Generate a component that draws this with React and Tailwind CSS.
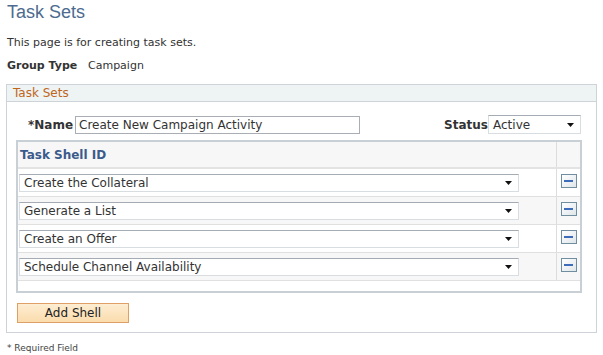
import React from 'react';

const shells = [
  'Create the Collateral',
  'Generate a List',
  'Create an Offer',
  'Schedule Channel Availability',
];

function Arrow() {
  return (
    <svg width="7" height="4" viewBox="0 0 7 4" className="block">
      <path d="M0 0H7L3.5 4Z" fill="#111" />
    </svg>
  );
}

function SelectBox({ value, className }) {
  return (
    <div className={`flex items-center justify-between bg-white border border-[#d8dde2] border-t-[#a6acb3] pl-[4px] pr-[6px] ${className}`}>
      <span className="text-[12px] leading-none text-[#333]">{value}</span>
      <Arrow />
    </div>
  );
}

function MinusButton() {
  return (
    <div className="w-[16px] h-[14px] border border-[#6f8fa0] bg-gradient-to-br from-[#ffffff] to-[#dfe6ea] flex items-center justify-center">
      <div className="w-[9px] h-[2px] bg-[#3c6cba]" />
    </div>
  );
}

export default function App() {
  return (
    <div className="w-[603px] h-[355px] bg-white text-[#333] font-['DejaVu_Sans',Verdana,sans-serif] text-[11px] overflow-hidden">
      <div className="pl-[7px] pt-[1px] h-[24px] text-[18px] leading-[22px] text-[#4d6b8f] font-['Liberation_Sans',Arial,sans-serif]">
        Task Sets
      </div>
      <div className="pl-[7px] mt-[12px] h-[14px] leading-[14px]">This page is for creating task sets.</div>
      <div className="pl-[7px] mt-[9px] h-[14px] leading-[14px] flex">
        <span className="font-bold w-[81px]">Group Type</span>
        <span>Campaign</span>
      </div>

      <div className="ml-[6px] mt-[11px] w-[591px] h-[249px] border border-[#cdd3d8] flex flex-col">
        <div className="h-[17px] bg-[#eef3f3] border-b border-[#cdd3d8] pl-[6px] text-[12px] leading-[16px] text-[#c0661b]">
          Task Sets
        </div>
        <div className="flex items-center h-[19px] mt-[13px]">
          <span className="ml-[21px] w-[47px] font-bold text-[12px]">*Name</span>
          <div className="w-[285px] h-[18px] border border-[#a8aeb4] pl-[3px] text-[12px] leading-[16px]">
            Create New Campaign Activity
          </div>
          <span className="ml-[84px] w-[44px] font-bold text-[12px]">Status</span>
          <SelectBox value="Active" className="w-[93px] h-[19px]" />
        </div>

        <div className="ml-[9px] mt-[6px] w-[566px] border-2 border-[#c8d0d6] flex flex-col">
          <div className="flex h-[27px] border-b-2 border-[#e3e3e3] bg-[#f7f7f7]">
            <div className="w-[539px] border-r border-[#dcdcdc] pl-[2px] flex items-center font-bold text-[12px] text-[#3b5b8c]">
              Task Shell ID
            </div>
            <div className="flex-1" />
          </div>
          {shells.map((s, i) => (
            <div key={s} className={`flex h-[28px] border-b border-[#e0e0e0] ${i % 2 ? 'bg-[#f7f7f7]' : 'bg-white'}`}>
              <div className="w-[539px] border-r border-[#dcdcdc] pl-[1px] pt-[5px]">
                <SelectBox value={s} className="w-[500px] h-[18px]" />
              </div>
              <div className="flex-1 flex justify-center pt-[5px]">
                <MinusButton />
              </div>
            </div>
          ))}
          <div className="h-[10px]" />
        </div>

        <button className="ml-[10px] mt-[10px] w-[112px] h-[20px] border border-[#dea066] bg-gradient-to-b from-[#fdedd2] to-[#fbdcad] text-[12px] leading-none text-[#222]">
          Add Shell
        </button>
      </div>

      <div className="pl-[7px] mt-[9px] text-[9px] leading-[12px] text-[#444]">* Required Field</div>
    </div>
  );
}
